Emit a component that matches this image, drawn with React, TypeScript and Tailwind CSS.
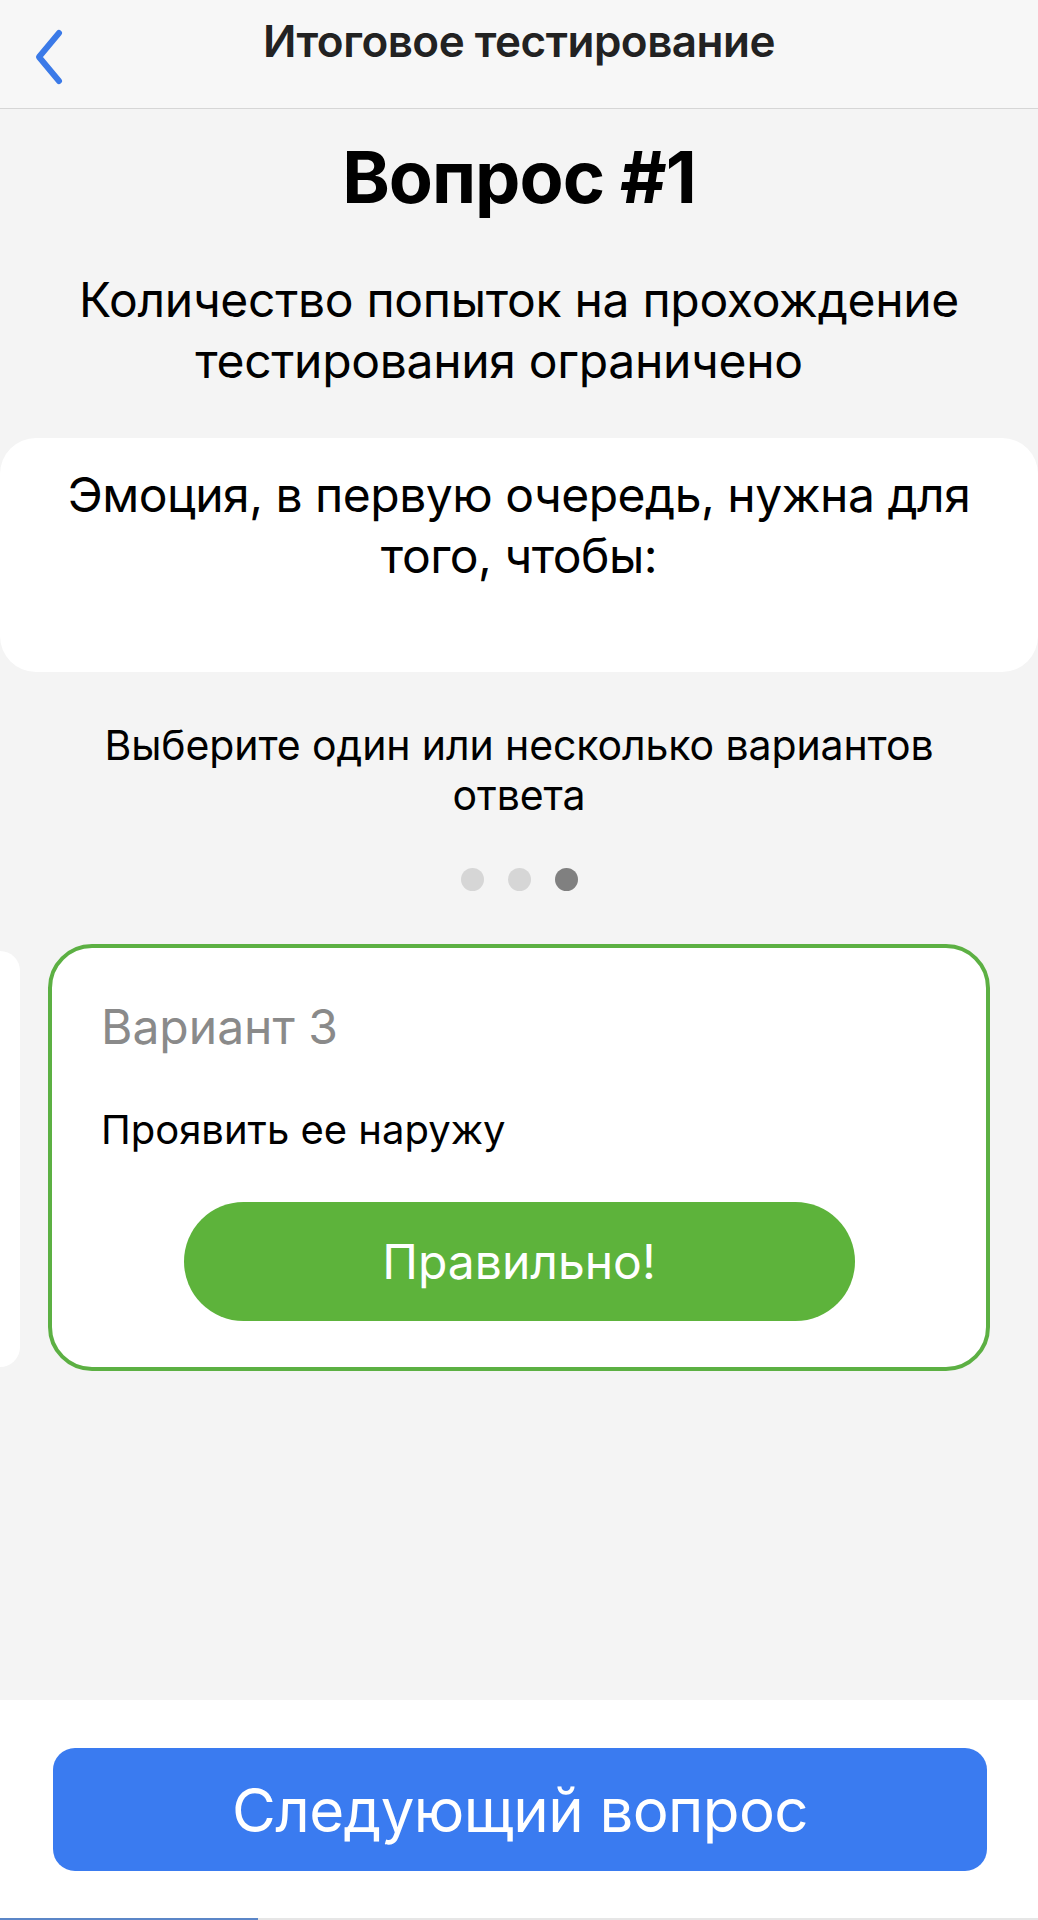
import React from "react";

export default function App() {
  return (
    <div
      className="w-[1038px] h-[1920px] flex flex-col bg-[#f4f4f4] overflow-hidden"
      style={{ fontFamily: "Inter, 'Noto Sans', sans-serif" }}
    >
      {/* Header */}
      <header className="relative h-[109px] shrink-0 bg-[#f7f7f7] border-b border-[#d6d6d6] flex justify-center pt-[19px]">
        <button className="absolute left-[30px] top-[28px] w-[38px] h-[58px] flex items-center justify-center">
          <svg width="38" height="58" viewBox="0 0 38 58" fill="none">
            <path
              d="M29 5 L9 29 L29 53"
              stroke="#3b7ae8"
              strokeWidth="6"
              strokeLinecap="round"
              strokeLinejoin="round"
            />
          </svg>
        </button>
        <h1 className="text-[44px] leading-none font-semibold text-[#222222] tracking-[-0.5px]">
          Итоговое тестирование
        </h1>
      </header>

      {/* Main */}
      <main className="flex-1 flex flex-col items-center">
        <h2 className="mt-[32px] text-[72px] leading-none font-bold text-black tracking-[-1px]">
          Вопрос #1
        </h2>
        <p className="mt-[56px] text-[48px] leading-[61px] text-black text-center tracking-[-0.3px]">
          Количество попыток на прохождение
          <br />
          тестирования ограничено
          <span className="inline-block w-[40px]" />
        </p>

        <div className="mt-[47px] w-full h-[234px] bg-white rounded-[36px] pt-[26px]">
          <p className="text-[48px] leading-[61px] text-black text-center tracking-[-0.5px]">
            Эмоция, в первую очередь, нужна для
            <br />
            того, чтобы:
          </p>
        </div>

        <p className="mt-[48px] text-[41px] leading-[50px] text-black text-center tracking-[-0.1px]">
          Выберите один или несколько вариантов
          <br />
          ответа
        </p>

        <div className="mt-[48px] flex gap-[24px]">
          <span className="w-[23px] h-[23px] rounded-full bg-[#d6d6d6]" />
          <span className="w-[23px] h-[23px] rounded-full bg-[#d6d6d6]" />
          <span className="w-[23px] h-[23px] rounded-full bg-[#808080]" />
        </div>

        <div className="mt-[53px] w-full flex gap-[28px]">
          <div className="w-[20px] h-[416px] mt-[7px] bg-white rounded-r-[22px]" />
          <div className="w-[942px] h-[427px] bg-white border-[4px] border-[#5cb043] rounded-[44px] pt-[55px] px-[49px] pb-[46px] flex flex-col">
            <div className="text-[48px] leading-none text-[#8a8a8a] tracking-[0px]">
              Вариант 3
            </div>
            <div className="mt-[59px] text-[40px] leading-none text-black tracking-[0px]">
              Проявить ее наружу
            </div>
            <div className="mt-auto self-center w-[671px] h-[119px] rounded-full bg-[#5db33b] flex items-center justify-center">
              <span className="text-[48px] text-white tracking-[0px]">Правильно!</span>
            </div>
          </div>
        </div>
      </main>

      {/* Footer */}
      <footer className="h-[220px] shrink-0 bg-white flex flex-col pt-[48px]">
        <div className="mx-[53px] mr-[51px] h-[123px] rounded-[22px] bg-[#3a7bf0] flex items-center justify-center">
          <span className="text-[60px] text-white tracking-[-0.6px]">Следующий вопрос</span>
        </div>
        <div className="mt-auto h-[2px] w-full bg-[#e6e6e6] flex">
          <div className="w-[258px] h-full bg-[#5b86c7]" />
        </div>
      </footer>
    </div>
  );
}
